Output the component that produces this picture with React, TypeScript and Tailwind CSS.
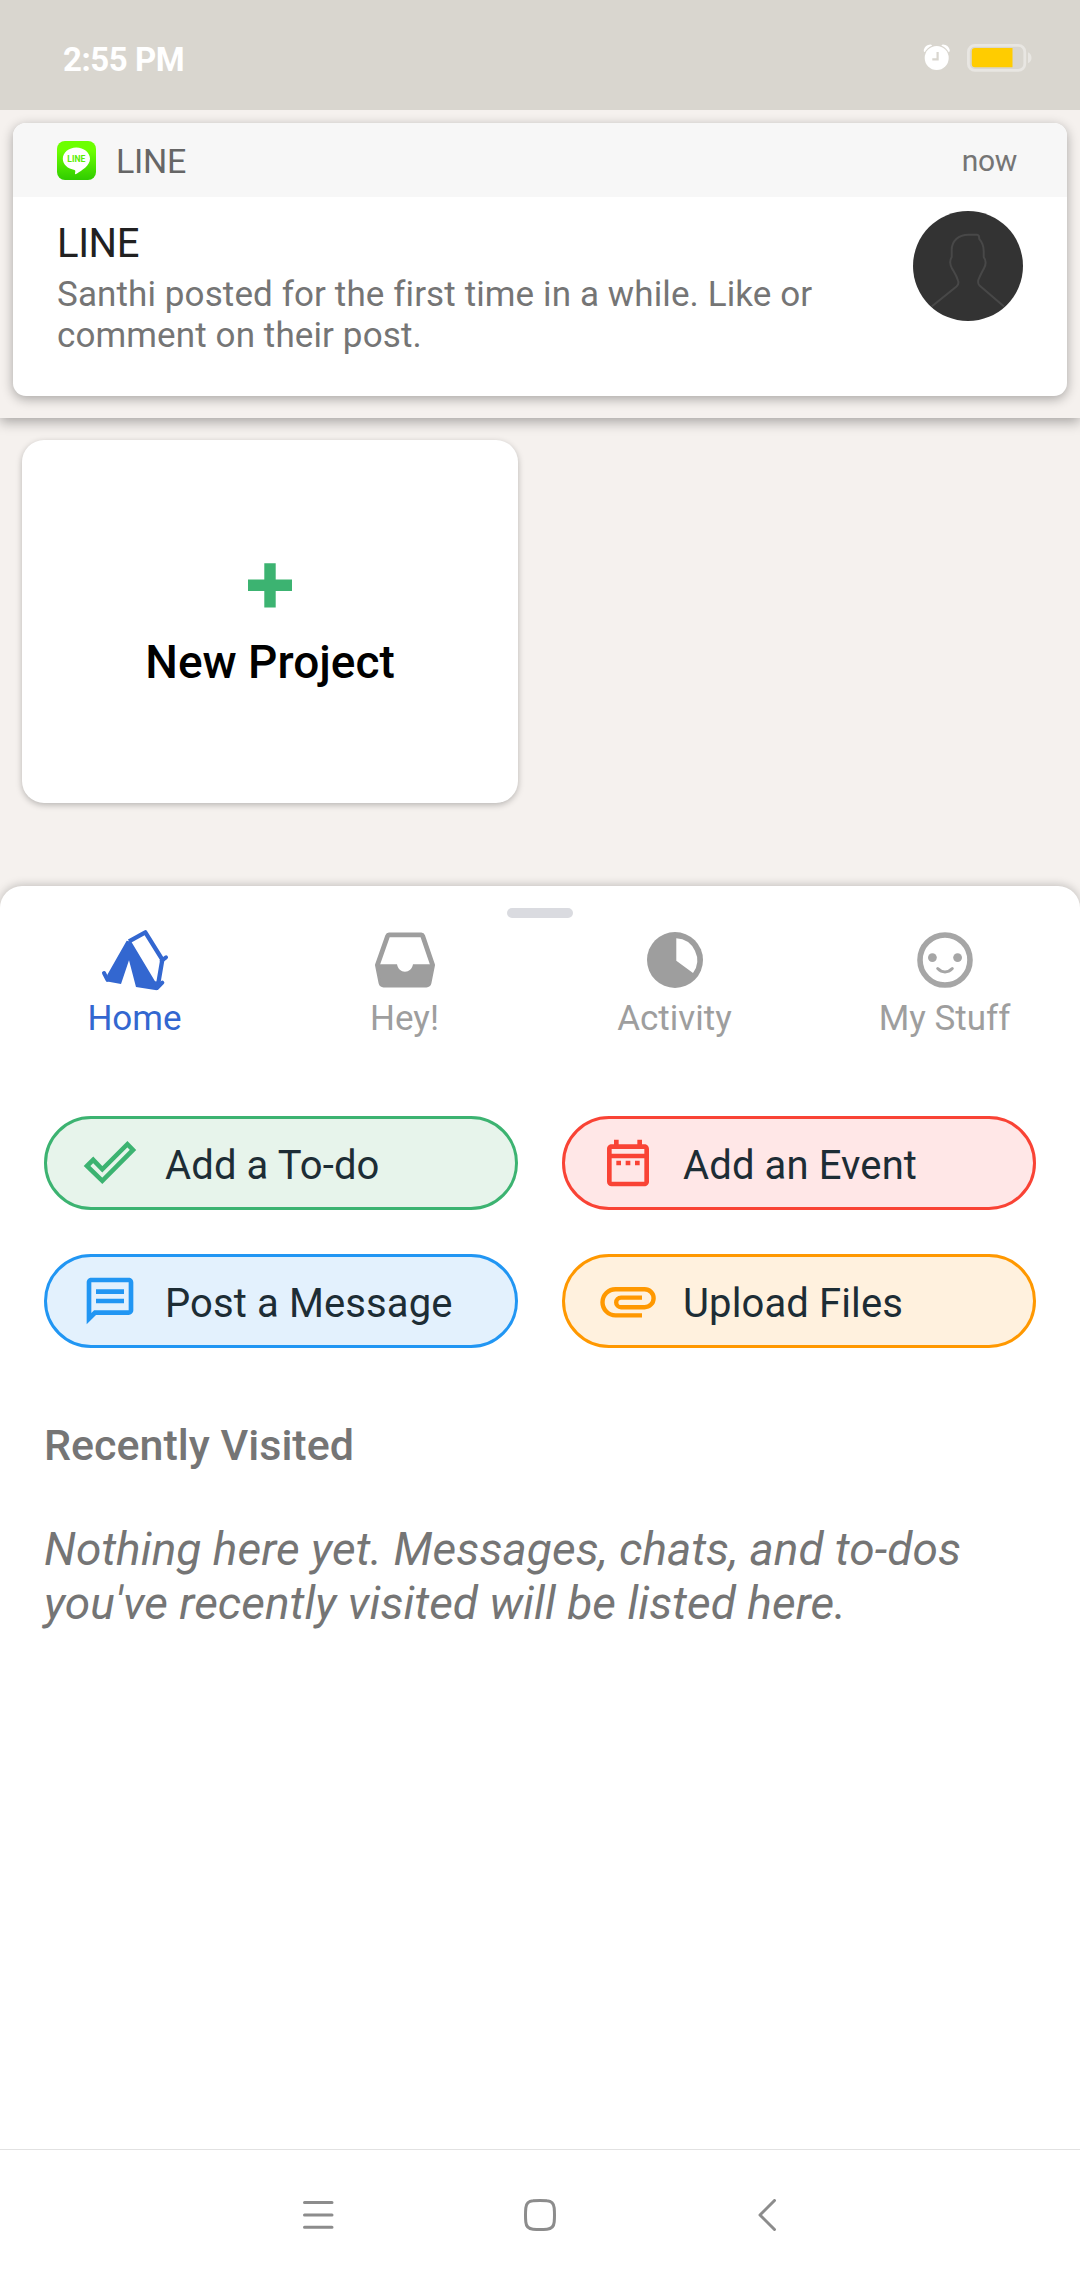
import React from "react";

function AlarmIcon() {
  return (
    <svg width="28" height="28" viewBox="0 0 28 28" fill="none">
      <path d="M2.5 6.5Q3.5 2.3 7.5 2.2M25 6.5Q24 2.3 20 2.2" stroke="#fff" strokeWidth="3.6" strokeLinecap="round" />
      <circle cx="13.7" cy="14.1" r="13.3" fill="#d9d6cf" />
      <circle cx="13.7" cy="14.1" r="12" fill="#fff" />
      <path d="M14.6 8V15.3H9.3" stroke="#d9d6cf" strokeWidth="2.2" />
    </svg>
  );
}

function BatteryIcon() {
  return (
    <svg width="66" height="28" viewBox="0 0 66 28" fill="none">
      <rect x="1.4" y="1.4" width="56.4" height="25" rx="6.5" stroke="#e8e6e2" strokeWidth="2.8" />
      <path d="M8 4H45.5V23.2H8a3.2 3.2 0 0 1-3.2-3.2V7.2A3.2 3.2 0 0 1 8 4z" fill="#ffcc00" />
      <path d="M61 8.3Q64.5 10 64.5 13.8T61 19.2z" fill="#e8e6e2" />
    </svg>
  );
}

function LineLogo() {
  return (
    <svg width="39" height="39" viewBox="0 0 39 39">
      <defs>
        <linearGradient id="lineGreen" x1="0" y1="0" x2="0" y2="1">
          <stop offset="0.25" stopColor="#6cff00" />
          <stop offset="1" stopColor="#30cc00" />
        </linearGradient>
      </defs>
      <rect width="39" height="39" rx="8" fill="url(#lineGreen)" />
      <path d="M19.3 6.5C11.8 6.5 5.8 11.5 5.8 17.8C5.8 23.4 10.8 28.1 17.5 28.9C18.7 29.2 18.3 30.7 18 32.6C18 33.4 18.6 33.4 20 32.4C24.5 29.7 33 24.7 33 17.8C33 11.5 26.8 6.5 19.3 6.5z" fill="#fff" />
      <text x="19.3" y="21.2" textAnchor="middle" fontSize="9" fontWeight="700" fontFamily="Roboto, sans-serif" fill="#58ee00" textLength="18" lengthAdjust="spacingAndGlyphs">LINE</text>
    </svg>
  );
}

function Avatar() {
  return (
    <svg width="110" height="110" viewBox="0 0 110 110" fill="none">
      <circle cx="55" cy="55" r="55" fill="#333" />
      <path
        d="M18.7 95.5L43.5 75.5Q46.3 73 45 69.5C43.5 64 41 61 38.9 57.3Q35.6 51 38.7 46V39C38.7 30 45.5 23.7 55.3 23.7H64Q66.3 23.7 66.2 27.8C69.5 31.5 70.7 35 70.7 40V46Q74.4 51 71 57.3C69 61 67.3 64 65.3 69Q64.6 72.8 66.5 74.5L91 95.5"
        stroke="#484848"
        strokeWidth="2"
      />
    </svg>
  );
}

function TentIcon() {
  return (
    <svg width="70" height="66.67" viewBox="120 200 210 200" fill="none">
      <path d="M200 241L214 244L285 363L306 365L290 390L228 380L207 300L183 371L138 363L142 343z" fill="#3367d0" />
      <path d="M207 243L256 216L307 298L293 380" stroke="#3367d0" strokeWidth="13" strokeLinejoin="round" />
      <path d="M305 301L318 291M291 383L307 367M142 358L132 338" stroke="#3367d0" strokeWidth="12" strokeLinecap="round" />
    </svg>
  );
}

function InboxIcon() {
  return (
    <svg width="60" height="56" viewBox="0 0 60 56" fill="none">
      <path d="M14 2.8H46.3Q47.3 2.8 47.7 4L57.6 33L54 51Q53.5 53 51.5 53H8.5Q6.5 53 6 51L2.4 33L12.6 4Q13 2.8 14 2.8z" stroke="#9e9e9e" strokeWidth="4.8" strokeLinejoin="round" />
      <path d="M2.4 32.3H22C23 37 26 39.8 30 39.8S37 37 38 32.3H57.6L54 51Q53.5 53 51.5 53H8.5Q6.5 53 6 51z" fill="#9e9e9e" />
    </svg>
  );
}

function ActivityIcon() {
  return (
    <svg width="56" height="56" viewBox="0 0 56 56">
      <circle cx="28" cy="28" r="28" fill="#9e9e9e" />
      <path d="M29.3 6.2A22 22 0 0 1 46 41L29.3 28.8z" fill="#fff" />
    </svg>
  );
}

function FaceIcon() {
  return (
    <svg width="56" height="56" viewBox="0 0 56 56" fill="none">
      <circle cx="28" cy="28" r="25" stroke="#a6a6a6" strokeWidth="5.6" />
      <circle cx="15.4" cy="25.6" r="4.4" fill="#a6a6a6" />
      <circle cx="40.6" cy="25.6" r="4.4" fill="#a6a6a6" />
      <path d="M20.7 36.5Q24 39.9 28 39.9T35.3 36.5" stroke="#a6a6a6" strokeWidth="3" strokeLinecap="round" />
    </svg>
  );
}

function CheckIcon() {
  return (
    <svg width="56" height="56" viewBox="0 0 56 56" fill="none">
      <path d="M5 31L11.2 24.8L20.3 34.3L45.4 9.2L51 14.9L20.3 45.8z" stroke="#3cb371" strokeWidth="4.6" />
    </svg>
  );
}

function EventIcon() {
  return (
    <svg width="56" height="56" viewBox="0 0 24 24" fill="#f94335">
      <path d="M7 11h2v2H7v-2zm14-5v14c0 1.1-.9 2-2 2H5a2 2 0 01-2-2l.01-14c0-1.1.88-2 1.99-2h1V2h2v2h8V2h2v2h1c1.1 0 2 .9 2 2zM5 8h14V6H5v2zm14 12V10H5v10h14zm-4-7h2v-2h-2v2zm-4 0h2v-2h-2v2z" />
    </svg>
  );
}

function MessageIcon() {
  return (
    <svg width="56" height="56" viewBox="0 0 24 24" fill="#2196f3">
      <path d="M4 4h16v12H5.17L4 17.17V4m0-2c-1.1 0-1.99.9-1.99 2L2 22l4-4h14c1.1 0 2-.9 2-2V4c0-1.1-.9-2-2-2H4zM6 7h12v2H6zM6 11h12v2H6z" />
    </svg>
  );
}

function ClipIcon() {
  return (
    <svg width="56" height="56" viewBox="0 0 56 56" fill="none">
      <path d="M42 42.4H15.6a13.1 13.1 0 0 1 0-26.2H44.6a9 9 0 0 1 0 18H21a4.8 4.8 0 0 1 0-9.6H42" stroke="#ff9800" strokeWidth="4.4" />
    </svg>
  );
}

const tabs = [
  { label: "Home", color: "text-[#3367d0]", icon: <TentIcon /> },
  { label: "Hey!", color: "text-[#9e9e9e]", icon: <InboxIcon /> },
  { label: "Activity", color: "text-[#9e9e9e]", icon: <ActivityIcon /> },
  { label: "My Stuff", color: "text-[#9e9e9e]", icon: <FaceIcon /> },
];

const actions = [
  { label: "Add a To-do", tone: "border-[#3cb371] bg-[#e7f4eb]", icon: <CheckIcon /> },
  { label: "Add an Event", tone: "border-[#f94335] bg-[#ffe7e7]", icon: <EventIcon /> },
  { label: "Post a Message", tone: "border-[#2196f3] bg-[#e3f1fd]", icon: <MessageIcon /> },
  { label: "Upload Files", tone: "border-[#ff9800] bg-[#fff1de]", icon: <ClipIcon /> },
];

export default function App() {
  return (
    <div className="flex h-[2280px] w-[1080px] flex-col overflow-hidden bg-[#f5f1ee] font-['Roboto',sans-serif]">
      <header className="h-[418px] shrink-0 bg-[#f5f1ee] shadow-[0_4px_12px_rgba(0,0,0,0.32)]">
        <div className="flex h-[110px] items-start justify-between bg-[#d9d6cf] pt-[44px] pr-[47px] pl-[63px]">
          <span className="pt-px text-[33px] leading-[30px] font-bold tracking-[-0.45px] text-white">2:55 PM</span>
          <div className="flex gap-[16px]">
            <AlarmIcon />
            <BatteryIcon />
          </div>
        </div>
        <section className="mx-[13px] mt-[13px] h-[273px] overflow-hidden rounded-[13px] bg-white shadow-[0_3px_12px_rgba(0,0,0,0.32)]">
          <div className="flex h-[74px] items-center bg-[#f7f7f7] pr-[50px] pl-[44px]">
            <LineLogo />
            <span className="ml-[20px] pt-[2px] text-[34px] leading-[40px] tracking-[-0.3px] text-[#666]">LINE</span>
            <span className="ml-auto pt-[2px] text-[30px] leading-[40px] tracking-[-0.3px] text-[#757575]">now</span>
          </div>
          <div className="flex justify-between pr-[44px] pl-[44px]">
            <div className="pt-[23px]">
              <h2 className="text-[40px] leading-[48px] tracking-[-0.4px] text-[#212121]">LINE</h2>
              <p className="mt-[6px] w-[800px] text-[35px] leading-[41px] tracking-[0.11px] text-[#757575]">
                Santhi posted for the first time in a while. Like or
                <br />
                comment on their post.
              </p>
            </div>
            <div className="mt-[14px]">
              <Avatar />
            </div>
          </div>
        </section>
      </header>

      <main className="h-[468px] shrink-0 pt-[22px] pl-[22px]">
        <button className="flex h-[363px] w-[496px] flex-col items-center rounded-[22px] bg-white pt-[123px] shadow-[0_2px_6px_rgba(0,0,0,0.25)]">
          <svg width="44" height="45" viewBox="0 0 44 45" fill="#3cb371">
            <path d="M16.3 0.3H27.7V16.6H44V28H27.7V44.6H16.3V28H0V16.6H16.3z" />
          </svg>
          <span className="mt-[24px] text-[46px] leading-[60px] font-medium text-black">New Project</span>
        </button>
      </main>

      <section className="flex flex-1 flex-col rounded-t-[22px] bg-white pt-[22px] shadow-[0_-1px_10px_rgba(0,0,0,0.22)]">
        <div className="h-[10px] w-[66px] self-center rounded-[5px] bg-[#dadbe0]" />
        <nav className="mt-[8px] grid grid-cols-4">
          {tabs.map((t) => (
            <div key={t.label} className="flex flex-col items-center">
              <div className="flex h-[68px] items-center justify-center">{t.icon}</div>
              <span className={`mt-px -ml-px text-[35px] leading-[48px] ${t.color}`}>{t.label}</span>
            </div>
          ))}
        </nav>
        <div className="mt-[73px] grid grid-cols-2 gap-[44px] px-[44px]">
          {actions.map((a) => (
            <button key={a.label} className={`flex h-[94px] items-center rounded-full border-3 pl-[35px] ${a.tone}`}>
              {a.icon}
              <span className="ml-[27px] pt-[5px] text-[40px] leading-[48px] tracking-[0.12px] text-[#1d2d35]">{a.label}</span>
            </button>
          ))}
        </div>
        <h3 className="mt-[71px] pl-[44px] text-[43px] leading-[52px] font-medium text-[#757575]">Recently Visited</h3>
        <p className="mt-[51px] pl-[44px] text-[46px] leading-[54px] tracking-[0.07px] text-[#757575] italic">
          Nothing here yet. Messages, chats, and to-dos
          <br />
          you've recently visited will be listed here.
        </p>
      </section>

      <footer className="grid h-[131px] shrink-0 grid-cols-[318px_444px_10px_1fr] border-t border-[#e2e2e2] bg-white pt-[49px]">
        <svg className="ml-[302px]" width="32" height="32" viewBox="0 0 32 32" stroke="#8c8c8c" strokeWidth="3" strokeLinecap="round">
          <path d="M2.5 3.5H30M2.5 16H30M2.5 28.3H30" />
        </svg>
        <svg className="ml-[206px]" width="32" height="32" viewBox="0 0 32 32" fill="none" stroke="#8c8c8c" strokeWidth="3">
          <path d="M9 1.8Q16 1.2 23 1.8Q29.6 2.2 30.2 9Q30.8 16 30.2 23Q29.6 29.8 23 30.2Q16 30.8 9 30.2Q2.4 29.8 1.8 23Q1.2 16 1.8 9Q2.4 2.2 9 1.8z" />
        </svg>
        <svg className="-ml-[4px]" width="20" height="32" viewBox="0 0 20 32" fill="none" stroke="#8c8c8c" strokeWidth="3" strokeLinecap="round" strokeLinejoin="round">
          <path d="M16.5 1.5L2 16L16.5 30.5" />
        </svg>
      </footer>
    </div>
  );
}
